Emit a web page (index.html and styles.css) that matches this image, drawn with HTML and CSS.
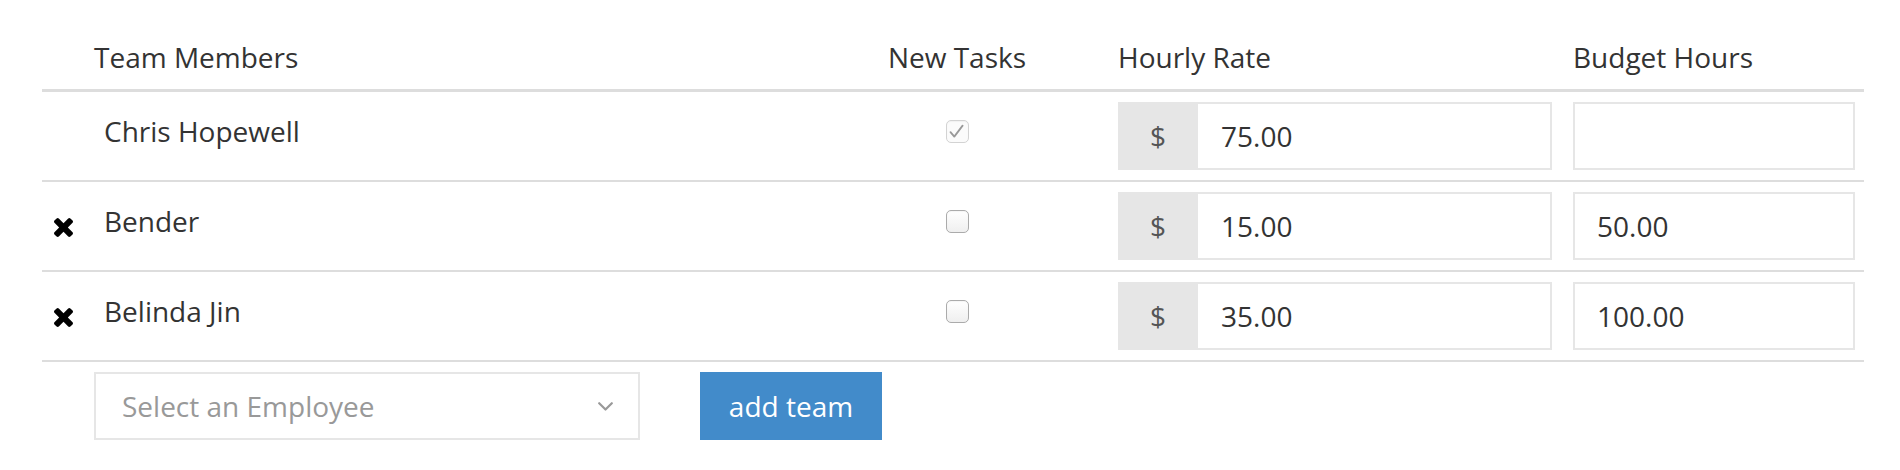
FILE: index.html
```html
<!DOCTYPE html>
<html lang="en">
<head>
<meta charset="utf-8">
<title>Team Members</title>
<link rel="stylesheet" href="styles.css">
</head>
<body>
<div class="team">
  <div class="tr thead">
    <div class="cell c-remove"></div>
    <div class="cell c-name">Team Members</div>
    <div class="cell c-tasks">New Tasks</div>
    <div class="cell c-rate">Hourly Rate</div>
    <div class="cell c-hours">Budget Hours</div>
  </div>

  <div class="tr member">
    <div class="cell c-remove"></div>
    <div class="cell c-name">Chris Hopewell</div>
    <div class="cell c-tasks">
      <span class="check is-checked is-disabled">
        <svg viewBox="0 0 23 23" width="23" height="23"><path d="M5.5 12.2 L9.3 16.6 L17.6 5.6" fill="none" stroke="#999" stroke-width="1.8" stroke-linecap="round" stroke-linejoin="round"/></svg>
      </span>
    </div>
    <div class="cell c-rate">
      <div class="input-group"><span class="addon">$</span><input class="field" type="text" value="75.00"></div>
    </div>
    <div class="cell c-hours"><input class="field solo" type="text" value=""></div>
  </div>

  <div class="tr member">
    <div class="cell c-remove">
      <svg class="remove" viewBox="302 366 1188 1188" width="19" height="19"><path d="M1490 1322q0 40-28 68l-136 136q-28 28-68 28t-68-28l-294-294-294 294q-28 28-68 28t-68-28l-136-136q-28-28-28-68t28-68l294-294-294-294q-28-28-28-68t28-68l136-136q28-28 68-28t68 28l294 294 294-294q28-28 68-28t68 28l136 136q28 28 28 68t-28 68l-294 294 294 294q28 28 28 68z" fill="#000"/></svg>
    </div>
    <div class="cell c-name">Bender</div>
    <div class="cell c-tasks"><span class="check"></span></div>
    <div class="cell c-rate">
      <div class="input-group"><span class="addon">$</span><input class="field" type="text" value="15.00"></div>
    </div>
    <div class="cell c-hours"><input class="field solo" type="text" value="50.00"></div>
  </div>

  <div class="tr member">
    <div class="cell c-remove">
      <svg class="remove" viewBox="302 366 1188 1188" width="19" height="19"><path d="M1490 1322q0 40-28 68l-136 136q-28 28-68 28t-68-28l-294-294-294 294q-28 28-68 28t-68-28l-136-136q-28-28-28-68t28-68l294-294-294-294q-28-28-28-68t28-68l136-136q28-28 68-28t68 28l294 294 294-294q28-28 68-28t68 28l136 136q28 28 28 68t-28 68l-294 294 294 294q28 28 28 68z" fill="#000"/></svg>
    </div>
    <div class="cell c-name">Belinda Jin</div>
    <div class="cell c-tasks"><span class="check"></span></div>
    <div class="cell c-rate">
      <div class="input-group"><span class="addon">$</span><input class="field" type="text" value="35.00"></div>
    </div>
    <div class="cell c-hours"><input class="field solo" type="text" value="100.00"></div>
  </div>
</div>

<div class="add-row">
  <div class="select">
    <span class="placeholder">Select an Employee</span>
    <svg class="chevron" viewBox="0 0 15 9" width="15" height="9"><path d="M1.2 1.2 L7.5 7.5 L13.8 1.2" fill="none" stroke="#999" stroke-width="2.2" stroke-linecap="round" stroke-linejoin="round"/></svg>
  </div>
  <button class="btn" type="button">add team</button>
</div>
</body>
</html>
```

FILE: styles.css
```css
* {
  box-sizing: border-box;
}

body {
  margin: 0;
  background: #fff;
  font-family: "Open Sans", "Liberation Sans", sans-serif;
  font-size: 28px;
  color: #333;
}

.team {
  margin-left: 42px;
  width: 1822px;
}

.tr {
  display: grid;
  grid-template-columns: 52px 763px 200px 506px 301px;
  align-items: start;
}

.thead {
  border-bottom: 3px solid #ddd;
}

.thead .cell {
  padding-top: 37px;
  padding-bottom: 12px;
  line-height: 40px;
}

.thead .c-tasks {
  text-align: center;
}

.thead .c-rate {
  padding-left: 61px;
}

.thead .c-hours {
  padding-left: 10px;
}

.member {
  padding: 10px 0;
  border-bottom: 2px solid #ddd;
}

.member .c-remove {
  padding: 26px 0 0 12px;
}

.remove {
  display: block;
}

.member .c-name {
  padding: 9px 0 0 10px;
  line-height: 40px;
}

.member .c-tasks {
  display: flex;
  justify-content: center;
  padding-top: 18px;
}

.member .c-rate {
  padding: 0 11px 0 61px;
}

.member .c-hours {
  padding: 0 9px 0 10px;
}

.check {
  display: block;
  width: 23px;
  height: 23px;
  border: 1.5px solid #ababab;
  border-radius: 5px;
  background: linear-gradient(#ffffff, #efefef);
  box-shadow: inset 0 1px 1px rgba(0, 0, 0, 0.04);
}

.check svg {
  display: block;
  margin: -1.5px;
}

.check.is-disabled {
  border-color: #d3d3d3;
  background: #fbfbfb;
}

.input-group {
  display: flex;
  height: 68px;
}

.addon {
  width: 80px;
  flex: none;
  display: flex;
  align-items: center;
  justify-content: center;
  background: #e6e6e6;
  color: #555;
}

.field {
  flex: 1;
  min-width: 0;
  height: 68px;
  margin: 0;
  border: 2px solid #e6e6e6;
  border-left: none;
  border-radius: 0;
  padding: 0 23px;
  background: #fff;
  font: inherit;
  color: #333;
  outline: none;
}

.field.solo {
  display: block;
  width: 100%;
  border-left: 2px solid #e6e6e6;
  padding: 0 22px;
}

.add-row {
  display: flex;
  gap: 60px;
  margin: 10px 0 0 94px;
}

.select {
  width: 546px;
  height: 68px;
  border: 2px solid #e6e6e6;
  padding: 0 25px 0 26px;
  display: flex;
  align-items: center;
  justify-content: space-between;
  color: #999;
}

.chevron {
  display: block;
}

.btn {
  width: 182px;
  height: 68px;
  border: 0;
  border-radius: 0;
  padding: 0;
  background: #428bca;
  color: #fff;
  font: inherit;
}
```
